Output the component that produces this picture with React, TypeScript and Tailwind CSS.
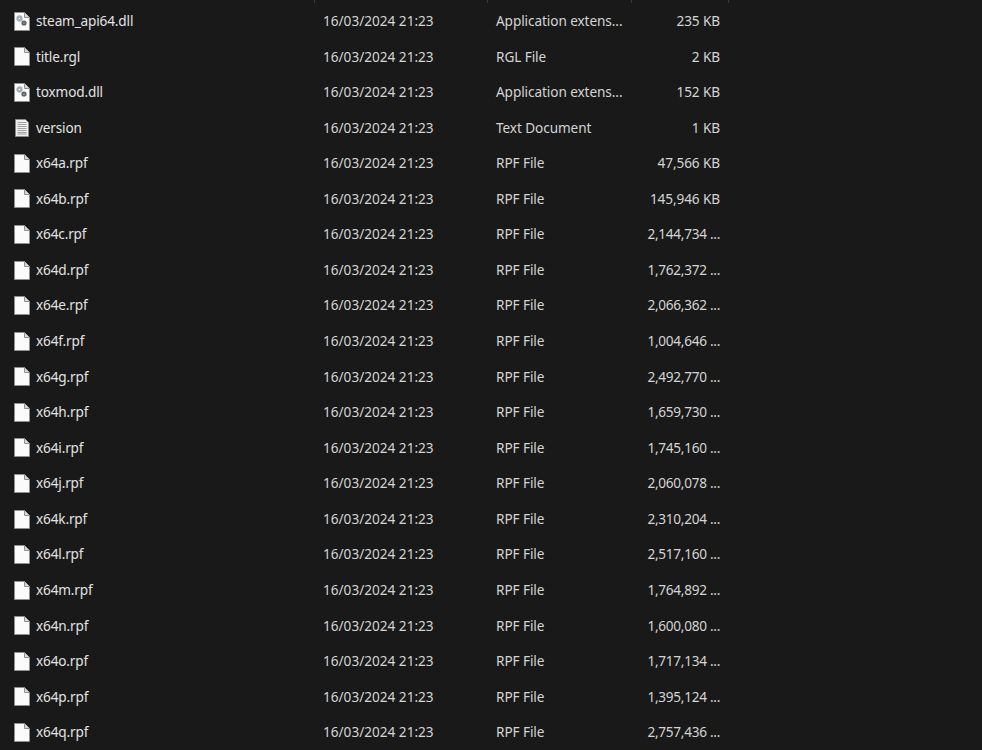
import React from 'react'

type Row = { name: string; type: string; size: string; icon?: 'gear' | 'text' }

const rows: Row[] = [
  { name: 'steam_api64.dll', type: 'Application extens...', size: '235 KB', icon: 'gear' },
  { name: 'title.rgl', type: 'RGL File', size: '2 KB' },
  { name: 'toxmod.dll', type: 'Application extens...', size: '152 KB', icon: 'gear' },
  { name: 'version', type: 'Text Document', size: '1 KB', icon: 'text' },
  { name: 'x64a.rpf', type: 'RPF File', size: '47,566 KB' },
  { name: 'x64b.rpf', type: 'RPF File', size: '145,946 KB' },
  { name: 'x64c.rpf', type: 'RPF File', size: '2,144,734 ...' },
  { name: 'x64d.rpf', type: 'RPF File', size: '1,762,372 ...' },
  { name: 'x64e.rpf', type: 'RPF File', size: '2,066,362 ...' },
  { name: 'x64f.rpf', type: 'RPF File', size: '1,004,646 ...' },
  { name: 'x64g.rpf', type: 'RPF File', size: '2,492,770 ...' },
  { name: 'x64h.rpf', type: 'RPF File', size: '1,659,730 ...' },
  { name: 'x64i.rpf', type: 'RPF File', size: '1,745,160 ...' },
  { name: 'x64j.rpf', type: 'RPF File', size: '2,060,078 ...' },
  { name: 'x64k.rpf', type: 'RPF File', size: '2,310,204 ...' },
  { name: 'x64l.rpf', type: 'RPF File', size: '2,517,160 ...' },
  { name: 'x64m.rpf', type: 'RPF File', size: '1,764,892 ...' },
  { name: 'x64n.rpf', type: 'RPF File', size: '1,600,080 ...' },
  { name: 'x64o.rpf', type: 'RPF File', size: '1,717,134 ...' },
  { name: 'x64p.rpf', type: 'RPF File', size: '1,395,124 ...' },
  { name: 'x64q.rpf', type: 'RPF File', size: '2,757,436 ...' },
]

const FileIcon = ({ icon }: { icon?: Row['icon'] }) => {
  if (icon === 'text') {
    return (
      <svg width="16" height="18" viewBox="0 0 16 18" className="shrink-0">
        <path d="M1.5.5h10l3 3v14h-13z" fill="#efefef" stroke="#8a8a8a" />
        {[3.5, 5.5, 7.5, 9.5, 11.5, 13.5, 15].map((y) => (
          <path key={y} d="M3.5 0h9" transform={`translate(0 ${y})`} stroke="#a2a2a2" />
        ))}
      </svg>
    )
  }
  return (
    <svg width="16" height="19" viewBox="0 0 16 19" className="shrink-0">
      <path d="M.5.5h10l5 5v13H.5z" fill="#fbfbfb" stroke="#8f8f8f" />
      <path d="M10.5.5v5h5" fill="#d8d8d8" stroke="#8f8f8f" />
      {icon === 'gear' && (
        <g fill="none">
          <circle cx="5.5" cy="6.5" r="2" stroke="#a9b1b8" strokeWidth="2.4" />
          <circle cx="10" cy="11" r="1.6" stroke="#5d6369" strokeWidth="2" />
        </g>
      )}
    </svg>
  )
}

export default function App() {
  return (
    <div className="relative w-[982px] h-[750px] overflow-hidden bg-[#191919] text-[13.6px] text-[#d4d4d4] font-['Noto_Sans','Open_Sans',sans-serif]">
      <div className="flex h-[3.4px]">
        <div className="w-[315px] border-r border-[#3a3a3a]" />
        <div className="w-[173px] border-r border-[#3a3a3a]" />
        <div className="w-[144px] border-r border-[#3a3a3a]" />
        <div className="w-[97px] border-r border-[#3a3a3a]" />
      </div>
      <div className="flex flex-col">
        {rows.map((r) => (
          <div key={r.name} className="flex items-center h-[35.57px] whitespace-nowrap">
            <div className="w-[315px] flex items-center gap-[6px] pl-[14px]">
              <FileIcon icon={r.icon} />
              <span className="text-[#e2e2e2] tracking-[-0.15px]">{r.name}</span>
            </div>
            <div className="w-[173px] pl-[8px]">16/03/2024 21:23</div>
            <div className="w-[144px] pl-[8px] tracking-[-0.08px]">{r.type}</div>
            <div className={r.size.endsWith('...') ? 'w-[88px] text-right tracking-[-0.28px]' : 'w-[88px] text-right tracking-[-0.1px]'}>
              {r.size}
            </div>
          </div>
        ))}
      </div>
    </div>
  )
}
